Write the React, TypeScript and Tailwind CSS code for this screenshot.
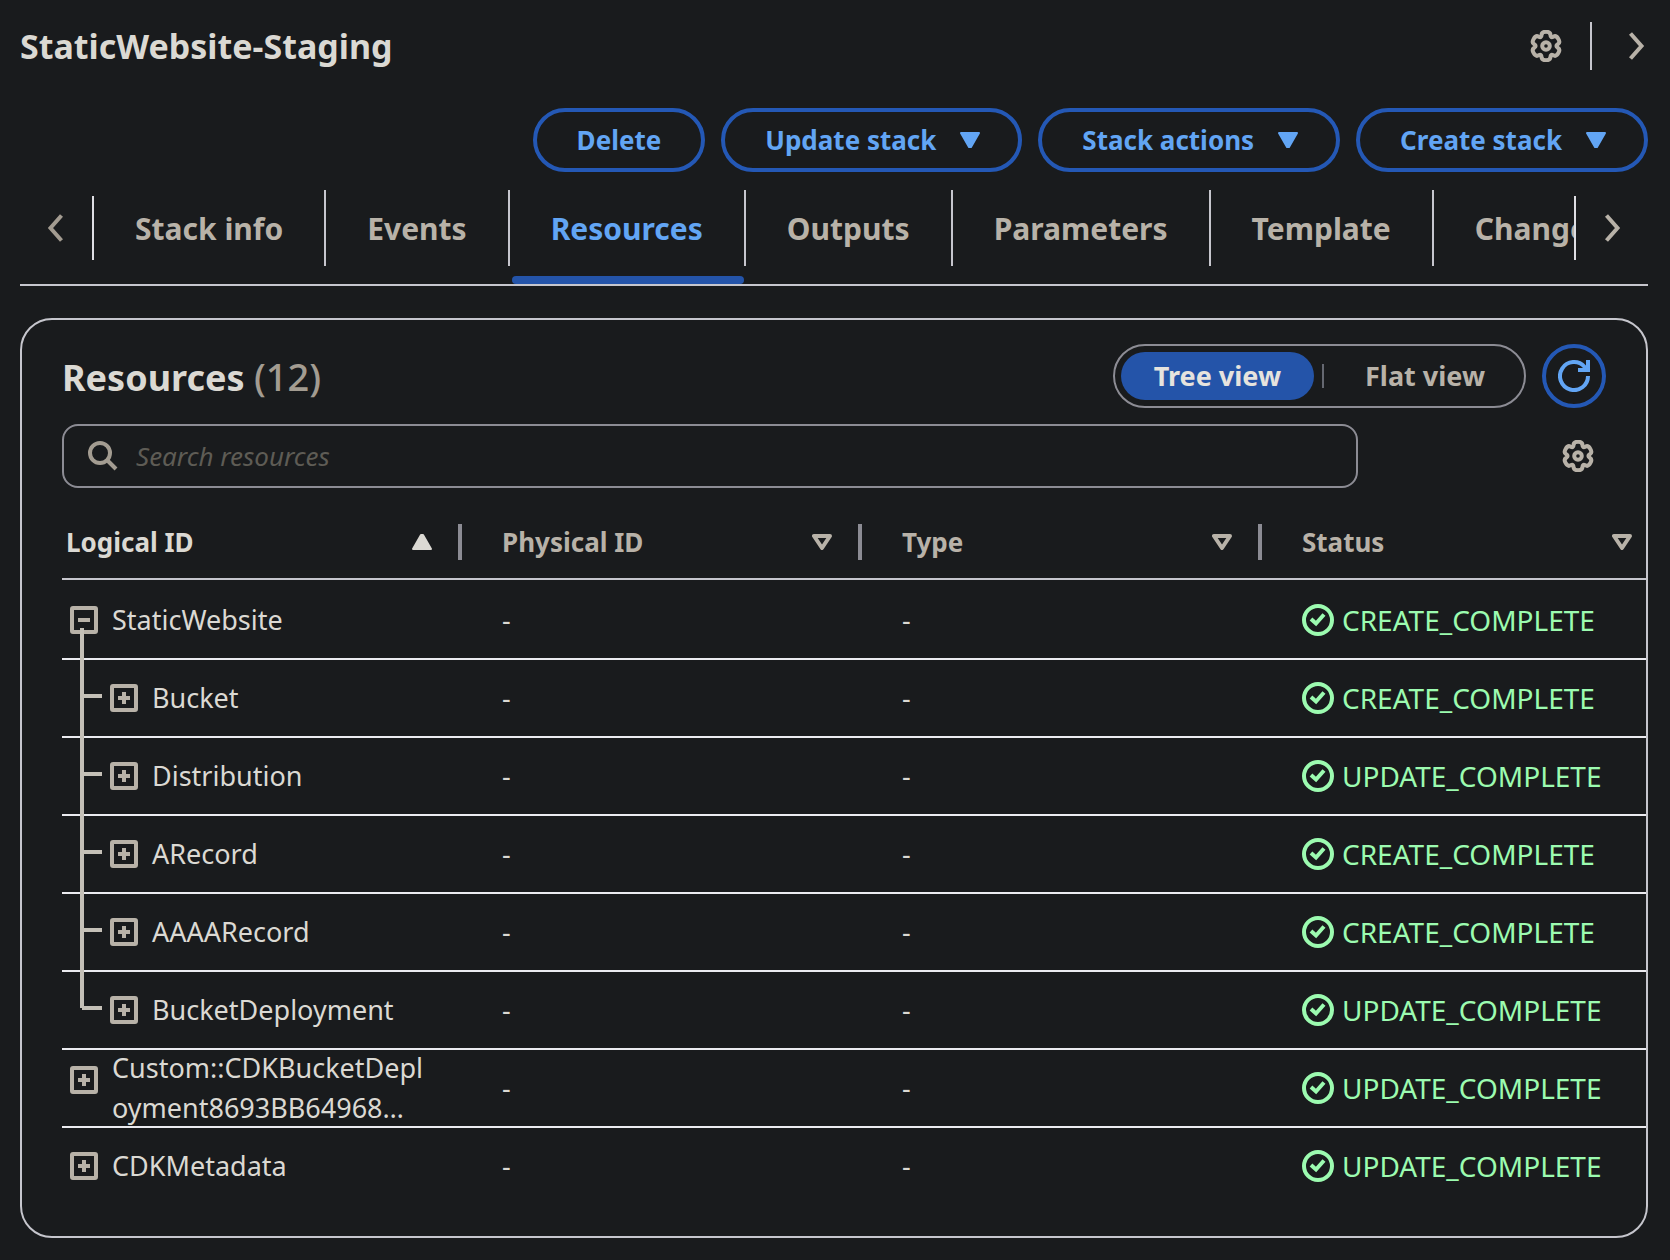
import { useState } from "react";

type Level = "root" | "child" | "last-child" | "top";

const tabs = ["Stack info", "Events", "Resources", "Outputs", "Parameters", "Template", "Change sets"];

const resources: { name: string[]; level: Level; status: string }[] = [
  { name: ["StaticWebsite"], level: "root", status: "CREATE_COMPLETE" },
  { name: ["Bucket"], level: "child", status: "CREATE_COMPLETE" },
  { name: ["Distribution"], level: "child", status: "UPDATE_COMPLETE" },
  { name: ["ARecord"], level: "child", status: "CREATE_COMPLETE" },
  { name: ["AAAARecord"], level: "child", status: "CREATE_COMPLETE" },
  { name: ["BucketDeployment"], level: "last-child", status: "UPDATE_COMPLETE" },
  { name: ["Custom::CDKBucketDepl", "oyment8693BB64968…"], level: "top", status: "UPDATE_COMPLETE" },
  { name: ["CDKMetadata"], level: "top", status: "UPDATE_COMPLETE" },
];

function gearOutline() {
  const points: [number, number][] = [];
  for (let lobe = 0; lobe < 6; lobe++) {
    for (const [offset, r] of [[-17, 14.9], [17, 14.9], [30, 9]]) {
      const a = ((lobe * 60 - 90 + offset) * Math.PI) / 180;
      points.push([16 + r * Math.cos(a), 16 + r * Math.sin(a)]);
    }
  }
  const mid = (p: [number, number], q: [number, number]) =>
    `${((p[0] + q[0]) / 2).toFixed(2)} ${((p[1] + q[1]) / 2).toFixed(2)}`;
  let d = `M${mid(points[points.length - 1], points[0])}`;
  points.forEach((p, i) => {
    d += `Q${p[0].toFixed(2)} ${p[1].toFixed(2)} ${mid(p, points[(i + 1) % points.length])}`;
  });
  return d + "Z";
}

const gearPath = gearOutline();

function GearIcon() {
  return (
    <svg viewBox="0 0 32 32" className="size-8" fill="none" stroke="currentColor" strokeWidth="4" strokeLinejoin="round" aria-hidden="true">
      <path d={gearPath} />
      <circle cx="16" cy="16" r="3.8" />
    </svg>
  );
}

function Chevron({ left = false }: { left?: boolean }) {
  return (
    <svg viewBox="0 0 18 28" className="h-7 w-[18px]" fill="none" stroke="currentColor" strokeWidth="4" aria-hidden="true">
      <path d={left ? "M14.5 1.5L3.5 14L14.5 26.5" : "M3.5 1.5L14.5 14L3.5 26.5"} />
    </svg>
  );
}

function CaretDown() {
  return (
    <svg viewBox="0 0 20 16" className="h-4 w-5" fill="currentColor" stroke="currentColor" strokeWidth="2" strokeLinejoin="round" aria-hidden="true">
      <path d="M1 1H19L11 15H9Z" />
    </svg>
  );
}

function SortIcon({ active }: { active: boolean }) {
  return active ? (
    <svg viewBox="0 0 20 16" className="h-4 w-5" fill="currentColor" stroke="currentColor" strokeWidth="2" strokeLinejoin="round" aria-hidden="true">
      <path d="M1 15H19L11 1H9Z" />
    </svg>
  ) : (
    <svg viewBox="0 0 20 16" className="h-4 w-5" fill="none" stroke="currentColor" strokeWidth="4" strokeLinejoin="round" aria-hidden="true">
      <path d="M2 2H18L10 14Z" />
    </svg>
  );
}

function RefreshIcon() {
  return (
    <svg viewBox="0 0 32 32" className="size-8" fill="none" stroke="currentColor" strokeWidth="4" aria-hidden="true">
      <path d="M30 16A14 14 0 1 1 26.5 6.8L29 10M30 0V10H20" />
    </svg>
  );
}

function SearchIcon() {
  return (
    <svg viewBox="0 0 30 30" className="size-[30px] shrink-0" fill="none" stroke="currentColor" strokeWidth="4" aria-hidden="true">
      <circle cx="12" cy="12" r="10" />
      <path d="M19 19L28 28" />
    </svg>
  );
}

function StatusIcon() {
  return (
    <svg viewBox="0 0 32 32" className="size-8 shrink-0" fill="none" stroke="currentColor" strokeWidth="4" aria-hidden="true">
      <circle cx="16" cy="16" r="14" />
      <path d="M9 15L14 19.5L22 10.5" />
    </svg>
  );
}

function ExpandButton({ open, label }: { open: boolean; label: string }) {
  return (
    <button
      type="button"
      aria-label={`${open ? "Collapse" : "Expand"} ${label}`}
      className="flex size-7 shrink-0 items-center justify-center rounded-[3px] border-4 border-[#b8b2a8] text-[#b8b2a8]"
    >
      <svg viewBox="0 0 12 12" className="size-3" stroke="currentColor" strokeWidth="4" aria-hidden="true">
        <path d={open ? "M0 6H12" : "M0 6H12M6 0V12"} />
      </svg>
    </button>
  );
}

function TreeLines({ level }: { level: Level }) {
  if (level === "top") return null;
  if (level === "root") return <span className="absolute top-12 -bottom-0.5 left-[18px] z-10 w-1 bg-[#c4c0b7]" />;
  return (
    <>
      <span
        className={
          level === "child"
            ? "absolute top-0 -bottom-0.5 left-[18px] z-10 w-1 bg-[#c4c0b7]"
            : "absolute top-0 left-[18px] z-10 h-9 w-1 bg-[#c4c0b7]"
        }
      />
      <span className="absolute top-[34px] left-5 h-1 w-5 bg-[#c4c0b7]" />
    </>
  );
}

function ActionButton({ label, menu = true }: { label: string; menu?: boolean }) {
  return (
    <button
      type="button"
      className={
        menu
          ? "flex h-16 items-center gap-6 rounded-full border-4 border-[#2458b5] pr-[38px] pl-10 text-[26px] font-bold text-[#62a5f4]"
          : "flex h-16 items-center rounded-full border-4 border-[#2458b5] px-10 text-[26px] font-bold text-[#62a5f4]"
      }
    >
      {label}
      {menu && <CaretDown />}
    </button>
  );
}

export default function App() {
  const [tab, setTab] = useState("Resources");
  const [view, setView] = useState("Tree view");

  return (
    <div className="min-h-screen bg-[#191b1d] pt-[22px] pr-[22px] pb-[22px] pl-5 font-['Noto_Sans',sans-serif] text-[#dbd9d3]">
      <header className="flex h-12 items-center justify-between">
        <h1 className="text-[34px] font-bold">StaticWebsite-Staging</h1>
        <div className="flex items-center text-[#b8b2a8]">
          <button type="button" aria-label="Preferences">
            <GearIcon />
          </button>
          <span className="mx-7 h-12 w-0.5 bg-[#c6c6cd]" />
          <button type="button" aria-label="Next" className="w-7 pl-[7px]">
            <Chevron />
          </button>
        </div>
      </header>

      <div className="mt-[38px] flex justify-end gap-4">
        <ActionButton label="Delete" menu={false} />
        <ActionButton label="Update stack" />
        <ActionButton label="Stack actions" />
        <ActionButton label="Create stack" />
      </div>

      <nav className="mt-[18px] flex items-start border-b-2 border-[#c6c6cd]">
        <button type="button" aria-label="Scroll left" className="mt-1.5 flex h-16 w-[74px] shrink-0 items-center border-r-2 border-[#dedee3] pl-[27px] text-[#a39c91]">
          <Chevron left />
        </button>
        <div role="tablist" className="flex min-w-0 flex-1 overflow-hidden">
          {tabs.map((t) => (
            <button
              key={t}
              type="button"
              role="tab"
              aria-selected={t === tab}
              onClick={() => setTab(t)}
              className={
                t === tab
                  ? "shrink-0 text-[30px] font-bold whitespace-nowrap text-[#62a5f4]"
                  : "shrink-0 text-[30px] font-bold whitespace-nowrap text-[#b8b2a8]"
              }
            >
              <span className="flex h-[76px] items-center border-r-2 border-[#c6c6cd] px-[41px]">{t}</span>
              <span className={t === tab ? "mx-0.5 mt-2.5 block h-2 rounded bg-[#2454a9]" : "mt-2.5 block h-2"} />
            </button>
          ))}
        </div>
        <button type="button" aria-label="Scroll right" className="mt-1.5 flex h-16 w-[74px] shrink-0 items-center border-l-2 border-[#dedee3] pl-[27px] text-[#b8b2a8]">
          <Chevron />
        </button>
      </nav>

      <section className="mt-8 overflow-hidden rounded-[32px] border-2 border-[#c6c6cd] pt-6 pb-[30px] pl-10">
        <div className="flex items-center justify-between pr-10">
          <h2 className="text-[36px] font-bold">
            Resources <span className="text-[38px] font-medium text-[#a39c91]">(12)</span>
          </h2>
          <div className="flex items-center gap-4">
            <div className="flex h-16 items-center rounded-full border-2 border-[#8c8c94] p-1.5 text-[27px] font-bold">
              {["Tree view", "Flat view"].map((v, i) => (
                <div key={v} className="flex items-center">
                  {i > 0 && <span className="mx-2 h-6 w-0.5 bg-[#656871]" />}
                  <button
                    type="button"
                    aria-pressed={v === view}
                    onClick={() => setView(v)}
                    className={
                      v === view
                        ? "flex h-12 items-center rounded-full bg-[#2454a9] px-[33px] text-[#e6e3de]"
                        : "flex h-12 items-center rounded-full px-[33px] text-[#b8b2a8]"
                    }
                  >
                    {v}
                  </button>
                </div>
              ))}
            </div>
            <button type="button" aria-label="Refresh" className="flex size-16 items-center justify-center rounded-full border-4 border-[#2458b5] text-[#62a5f4]">
              <RefreshIcon />
            </button>
          </div>
        </div>

        <div className="mt-4 flex items-center pr-10">
          <label className="mr-48 flex h-16 min-w-0 flex-1 items-center gap-[18px] rounded-2xl border-2 border-[#8c8c94] px-6 text-[#a39c91]">
            <SearchIcon />
            <input
              type="search"
              aria-label="Search resources"
              placeholder="Search resources"
              className="min-w-0 flex-1 bg-transparent text-[26px] text-[#dbd9d3] outline-none placeholder:text-[#5e5c55] placeholder:italic"
            />
          </label>
          <button type="button" aria-label="Table preferences" className="px-3 text-[#b8b2a8]">
            <GearIcon />
          </button>
        </div>

        <table className="mt-[18px] w-full table-fixed border-separate border-spacing-0 text-left">
          <thead>
            <tr>
              {["Logical ID", "Physical ID", "Type", "Status"].map((h, i) => (
                <th
                  key={h}
                  scope="col"
                  className={
                    i === 0
                      ? "h-[74px] w-[400px] border-b-2 border-[#c6c6cd] pl-1 text-[#dbd9d3]"
                      : i < 3
                        ? "h-[74px] w-[400px] border-b-2 border-[#c6c6cd] pl-10 text-[#b8b2a8]"
                        : "h-[74px] border-b-2 border-[#c6c6cd] pr-3.5 pl-10 text-[#b8b2a8]"
                  }
                >
                  <div className="flex items-center justify-between">
                    <button type="button" className="flex flex-1 items-center justify-between text-[26px] font-bold">
                      {h}
                      <SortIcon active={i === 0} />
                    </button>
                    {i < 3 && <span className="ml-[26px] h-9 w-1 bg-[#8c8c94]" />}
                  </div>
                </th>
              ))}
            </tr>
          </thead>
          <tbody className="text-[27px] font-[450] [&>tr:first-child>td]:h-20 [&>tr:first-child>td]:pt-0.5 [&>tr:last-child>td]:border-transparent [&>tr>td]:h-[78px] [&>tr>td]:border-b-2 [&>tr>td]:border-[#ebebf0]">
            {resources.map((r) => {
              const nested = r.level === "child" || r.level === "last-child";
              const wrapped = r.name.length > 1;
              return (
                <tr key={r.name[0]}>
                  <td className={nested ? "relative pl-12" : "relative pl-2"}>
                    <TreeLines level={r.level} />
                    <div className={wrapped ? "-my-1 flex items-start gap-3.5" : "flex items-center gap-3.5"}>
                      <span className={wrapped ? "mt-[18px]" : ""}>
                        <ExpandButton open={r.level === "root"} label={r.name.join("")} />
                      </span>
                      <span className="leading-10">
                        {r.name.map((line) => (
                          <span key={line} className="block">
                            {line}
                          </span>
                        ))}
                      </span>
                    </div>
                  </td>
                  <td className="pl-10">-</td>
                  <td className="pl-10">-</td>
                  <td className="pl-10">
                    <span className="flex items-center gap-2 text-[28px] leading-[38px] text-[#9cfbb0]">
                      <StatusIcon />
                      {r.status}
                    </span>
                  </td>
                </tr>
              );
            })}
          </tbody>
        </table>
      </section>
    </div>
  );
}
